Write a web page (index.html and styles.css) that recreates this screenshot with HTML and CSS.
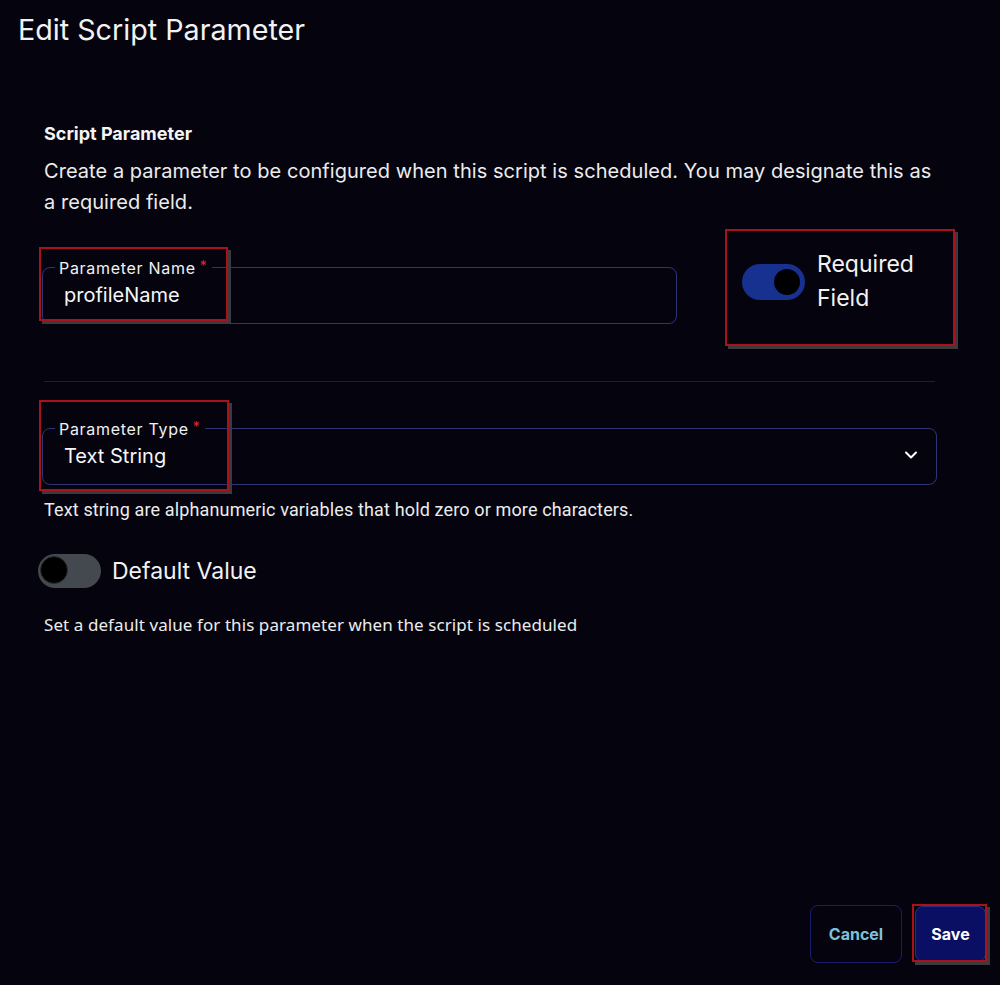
FILE: index.html
```html
<!DOCTYPE html>
<html>
<head>
<meta charset="utf-8">
<link rel="stylesheet" href="styles.css">
</head>
<body>
<div class="dialog">
  <h1 class="title">Edit Script Parameter</h1>
  <div class="content">
    <h2 class="section-title">Script Parameter</h2>
    <p class="section-desc">Create a parameter to be configured when this script is scheduled. You may designate this as a required field.</p>

    <div class="row">
      <div class="field field-name">
        <fieldset class="outline">
          <legend><span>Parameter Name</span><span class="req">*</span></legend>
        </fieldset>
        <div class="value">profileName</div>
        <div class="mark mark-name"></div>
      </div>
      <div class="required-box">
        <div class="toggle on"><span class="knob"></span></div>
        <div class="toggle-label">Required<br>Field</div>
        <div class="mark mark-req"></div>
      </div>
    </div>

    <hr class="divider">

    <div class="field field-type">
      <fieldset class="outline">
        <legend><span>Parameter Type</span><span class="req">*</span></legend>
      </fieldset>
      <div class="value">Text String</div>
      <svg class="chevron" width="14" height="10" viewBox="0 0 14 10"><path d="M2 2.5 L7 7.5 L12 2.5" fill="none" stroke="#ffffff" stroke-width="2" stroke-linecap="round" stroke-linejoin="round"/></svg>
      <div class="mark mark-type"></div>
    </div>
    <p class="helper">Text string are alphanumeric variables that hold zero or more characters.</p>

    <div class="default-row">
      <div class="toggle off"><span class="knob"></span></div>
      <div class="default-label">Default Value</div>
    </div>
    <p class="default-desc">Set a default value for this parameter when the script is scheduled</p>
  </div>

  <div class="actions">
    <button class="btn btn-cancel">Cancel</button>
    <div class="save-wrap">
      <button class="btn btn-save">Save</button>
      <div class="mark mark-save"></div>
    </div>
  </div>
</div>
</body>
</html>
```

FILE: styles.css
```css
html, body {
  margin: 0;
  padding: 0;
  background: #05040e;
}
body {
  font-family: Inter, "Noto Sans", sans-serif;
  color: #ffffff;
  width: 1000px;
  height: 985px;
  overflow: hidden;
}
.dialog {
  position: relative;
  height: 985px;
}
.title {
  margin: 0;
  padding: 12px 0 0 18px;
  font-size: 28.7px;
  font-weight: 400;
  line-height: 36px;
  color: #f2f2f2;
}
.content {
  padding: 74px 64px 0 44px;
}
.section-title {
  margin: 0;
  font-size: 18px;
  font-weight: 700;
  line-height: 24px;
  color: #f4f4f4;
}
.section-desc {
  margin: 10px 0 0 0;
  font-size: 20px;
  line-height: 31px;
  color: #ececec;
  letter-spacing: 0.05px;
}
.row {
  display: flex;
  align-items: flex-start;
  margin-top: 48px;
}
.field {
  position: relative;
  height: 58px;
}
.field-name {
  width: 635px;
  margin-left: -2px;
  flex: none;
}
.outline {
  position: absolute;
  left: 0;
  right: 0;
  top: -9px;
  bottom: 0;
  margin: 0;
  padding: 0 12px;
  border: 1px solid #2e3474;
  border-radius: 8px;
  box-sizing: border-box;
}
.outline legend {
  padding: 0 5px 0 4px;
  margin: 0;
  font-family: Inter, "Noto Sans", sans-serif;
  font-size: 16px;
  line-height: 18px;
  color: #f0f0f0;
  letter-spacing: 0.7px;
}
.req {
  color: #e0263a;
  margin-left: 4px;
  font-size: 14px;
  vertical-align: 3px;
}
.value {
  position: absolute;
  left: 22px;
  top: 17px;
  font-family: Inter, "Noto Sans", sans-serif;
  font-size: 20px;
  line-height: 24px;
  color: #f6f6f6;
}
.mark {
  position: absolute;
  border: 2px solid #a8121c;
  box-shadow: 3px 3px 0 #3b3b3f;
  box-sizing: border-box;
  pointer-events: none;
}
.mark-name {
  left: -3px;
  top: -19px;
  width: 189px;
  height: 74px;
}
.required-box {
  position: relative;
  flex: none;
  margin-left: 48px;
  margin-top: -37px;
  width: 230px;
  height: 117px;
  display: flex;
  align-items: flex-start;
  padding: 18px 0 0 17px;
  box-sizing: border-box;
}
.mark-req {
  left: 0;
  top: 0;
  width: 230px;
  height: 117px;
}
.toggle {
  position: relative;
  flex: none;
  width: 63px;
  height: 36px;
  border-radius: 18px;
  box-sizing: border-box;
}
.toggle .knob {
  position: absolute;
  top: 5px;
  width: 26px;
  height: 26px;
  border-radius: 50%;
  background: #000000;
}
.toggle.on {
  background: #16318f;
  margin-top: 17px;
}
.toggle.on .knob {
  right: 5px;
}
.toggle.off {
  background: #44494f;
  width: 63px;
  height: 34px;
  border-radius: 17px;
}
.toggle.off .knob {
  left: 2px;
  top: 2px;
  width: 28px;
  height: 28px;
  border: 1px solid #2a2d31;
  box-sizing: border-box;
}
.toggle-label {
  margin-left: 12px;
  font-size: 23px;
  line-height: 34px;
  color: #f2f2f2;
}
.divider {
  margin: 35px 0 0 0;
  border: none;
  border-top: 1px solid #1e1f33;
  width: 891px;
}
.field-type {
  width: 895px;
  margin-left: -2px;
  margin-top: 45px;
}
.chevron {
  position: absolute;
  right: 19px;
  top: 23px;
}
.mark-type {
  left: -3px;
  top: -27px;
  width: 190px;
  height: 91px;
}
.helper {
  margin: 15px 0 0 0;
  font-family: Roboto, "Liberation Sans", sans-serif;
  font-size: 18px;
  line-height: 20px;
  letter-spacing: 0.14px;
  color: #ececec;
}
.default-row {
  display: flex;
  align-items: center;
  margin-top: 33px;
  margin-left: -6px;
}
.default-label {
  margin-left: 11px;
  font-size: 23px;
  line-height: 36px;
  color: #f2f2f2;
}
.default-desc {
  margin: 25px 0 0 0;
  font-family: "Noto Sans", sans-serif;
  font-size: 17px;
  line-height: 22px;
  letter-spacing: 0.08px;
  color: #ececec;
}
.actions {
  position: absolute;
  right: 14px;
  bottom: 22px;
  display: flex;
  align-items: center;
  gap: 13px;
}
.btn {
  font-family: Inter, "Noto Sans", sans-serif;
  font-size: 16px;
  font-weight: 700;
  border-radius: 8px;
  cursor: pointer;
}
.btn-cancel {
  width: 92px;
  height: 58px;
  background: transparent;
  border: 1px solid #1a1d6b;
  color: #7cc2dc;
}
.save-wrap {
  position: relative;
}
.btn-save {
  width: 71px;
  height: 56px;
  background: #0a0f63;
  border: 1px solid #2a2f7a;
  color: #ffffff;
  display: block;
}
.mark-save {
  left: -3px;
  top: -2px;
  width: 75px;
  height: 58px;
}
```
